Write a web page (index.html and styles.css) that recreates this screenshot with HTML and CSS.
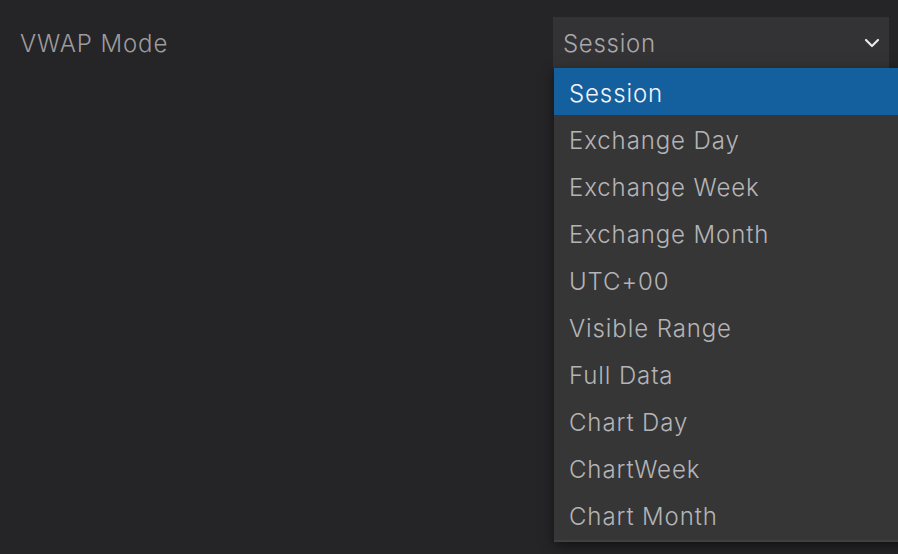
FILE: index.html
```html
<!DOCTYPE html>
<html>
<head>
<meta charset="utf-8">
<link rel="stylesheet" href="styles.css">
</head>
<body>
<div class="row">
  <div class="label">VWAP Mode</div>
  <div class="field">
    <div class="select">
      <span class="value">Session</span>
      <svg class="chev" width="16" height="10" viewBox="0 0 16 10"><path d="M2 2 L8 8 L14 2" fill="none" stroke="#e8e8e8" stroke-width="2.2" stroke-linecap="round" stroke-linejoin="round"/></svg>
    </div>
    <ul class="menu">
      <li class="item active">Session</li>
      <li class="item">Exchange Day</li>
      <li class="item">Exchange Week</li>
      <li class="item">Exchange Month</li>
      <li class="item">UTC+00</li>
      <li class="item">Visible Range</li>
      <li class="item">Full Data</li>
      <li class="item">Chart Day</li>
      <li class="item">ChartWeek</li>
      <li class="item">Chart Month</li>
    </ul>
  </div>
</div>
</body>
</html>
```

FILE: styles.css
```css
html, body {
  margin: 0;
  padding: 0;
  background: #252527;
  width: 898px;
  height: 554px;
  overflow: hidden;
  font-family: Inter, "Noto Sans", sans-serif;
  font-weight: 300;
}
.row {
  display: flex;
  justify-content: space-between;
  padding: 17px 0 0 20px;
}
.label {
  color: #9c9c9e;
  font-size: 24px;
  letter-spacing: 0.9px;
  line-height: 52px;
  padding-top: 1px;
}
.field {
  position: relative;
  width: 345px;
}
.select {
  width: 336px;
  height: 51px;
  box-sizing: border-box;
  background: #333335;
  display: flex;
  align-items: center;
  justify-content: space-between;
  padding: 2px 9px 0 10px;
}
.value {
  color: #a8a8aa;
  font-size: 24px;
  letter-spacing: 0.7px;
}
.chev {
  margin-top: -2px;
}
.menu {
  position: absolute;
  top: 51px;
  left: 1px;
  width: 360px;
  margin: 0;
  padding: 0 0 2px 0;
  list-style: none;
  background: #363637;
  border-bottom: 2px solid #404042;
  box-shadow: 0 4px 12px rgba(0,0,0,0.5);
}
.item {
  height: 47px;
  line-height: 51px;
  padding-left: 15px;
  color: #b4b4b6;
  font-size: 24px;
  letter-spacing: 0.9px;
  overflow: hidden;
}
.item.active {
  background: #14609e;
  color: #f4f4f6;
}
```
